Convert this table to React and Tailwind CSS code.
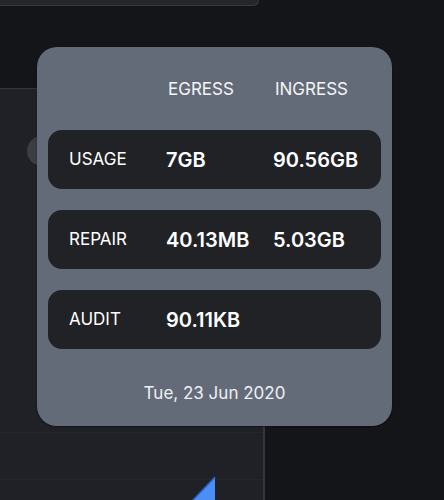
const rows = [
  { label: "USAGE", egress: "7GB", ingress: "90.56GB" },
  { label: "REPAIR", egress: "40.13MB", ingress: "5.03GB" },
  { label: "AUDIT", egress: "90.11KB", ingress: "" },
];

const App = () => {
  return (
    <div className="relative w-[444px] h-[500px] overflow-hidden bg-[#141519] font-['Inter',sans-serif]">
      {/* Background panels */}
      <div className="flex flex-col h-full">
        <div className="w-[259px] h-[6px] bg-[#25262b] border-b border-r border-[#393a40] rounded-br-[8px]"></div>
        <div className="relative mt-[82px] w-[265px] flex-1 bg-[#202126] border-t border-r-2 border-[#35363c]">
          <div className="absolute left-[27px] top-[47px] w-[30px] h-[30px] rounded-full bg-[#3b3d45]"></div>
          <div className="absolute left-0 right-0 top-[343px] border-t border-dotted border-[#2c2d33]"></div>
          <div className="absolute left-0 right-0 top-[390px] border-t border-dotted border-[#2c2d33]"></div>
          <svg className="absolute left-[190px] top-[386px]" width="30" height="30" viewBox="0 0 30 30">
            <path d="M2 26 L25 2 L25 30 L0 30 Z" fill="#4b8ff6" />
            <path d="M2 26 L25 2" stroke="#2a5fc2" strokeWidth="1.5" fill="none" />
          </svg>
        </div>
      </div>

      {/* Tooltip */}
      <div className="absolute left-[37px] top-[47px] w-[355px] h-[379px] rounded-[20px] bg-[#646b78] px-[11px] shadow-[0_1px_2px_rgba(0,0,0,0.4)]">
        <div className="grid grid-cols-[120px_107px_1fr] pt-[30px] pb-[29px] text-[17px] leading-6 text-[#f4f5f7]">
          <span></span>
          <span>EGRESS</span>
          <span>INGRESS</span>
        </div>
        <div className="flex flex-col gap-[21px]">
          {rows.map((row) => (
            <div
              key={row.label}
              className="grid grid-cols-[97px_107px_1fr] items-center h-[59px] rounded-[14px] bg-[#212226] pl-[21px] text-white"
            >
              <span className="text-[17px]">{row.label}</span>
              <span className="text-[20px] font-semibold">{row.egress}</span>
              <span className="text-[20px] font-semibold">{row.ingress}</span>
            </div>
          ))}
        </div>
        <div className="mt-[32px] text-center text-[17px] leading-6 text-[#eef0f3]">Tue, 23 Jun 2020</div>
      </div>
    </div>
  );
};

export default App;
